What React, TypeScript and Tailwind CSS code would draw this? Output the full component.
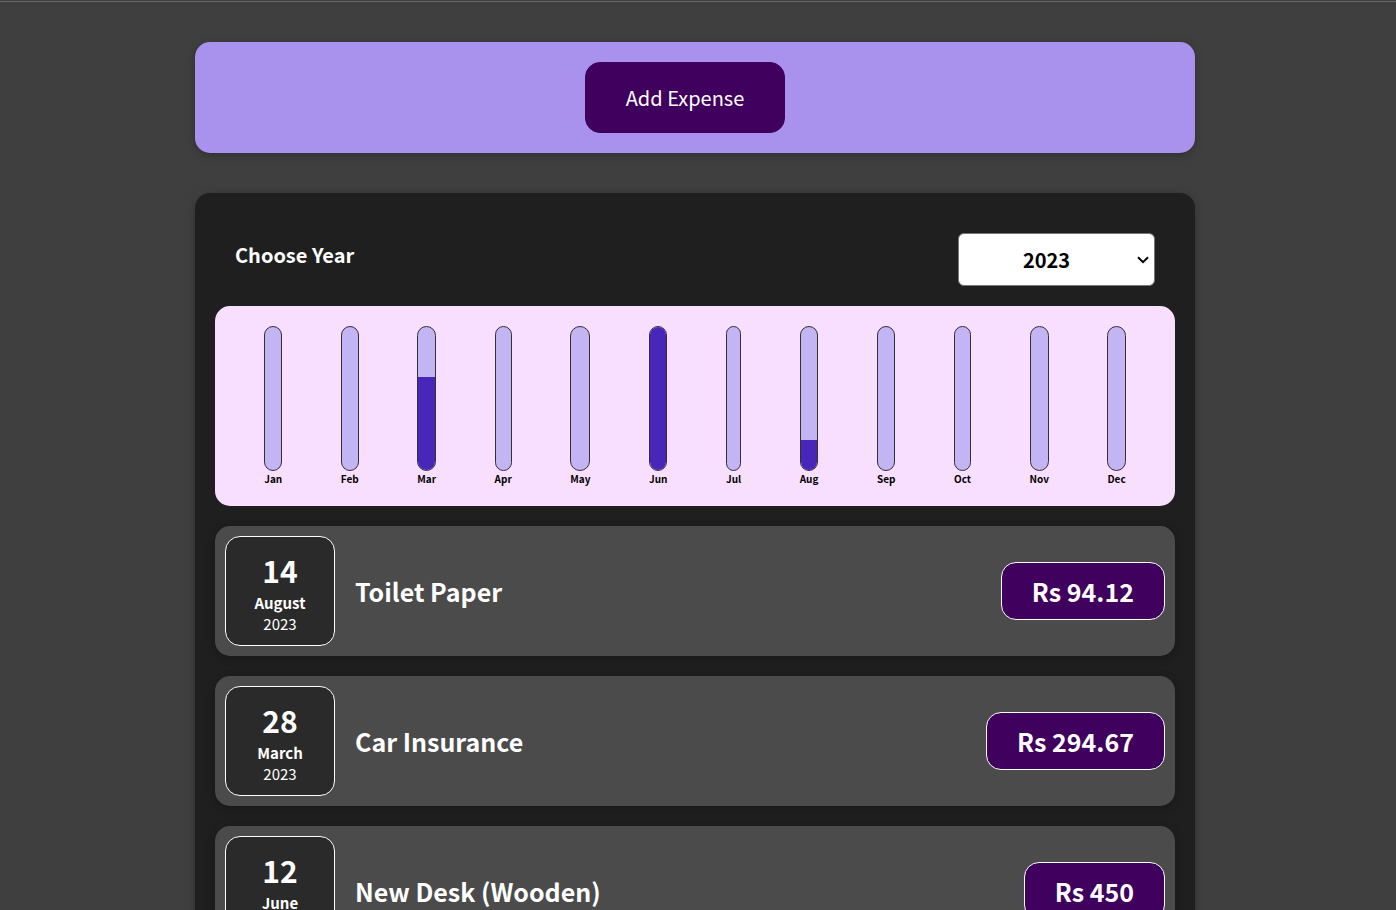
import { useState } from "react";

type Expense = {
  id: string;
  title: string;
  amount: string;
  day: string;
  month: string;
  year: string;
};

const MONTHS = [
  { label: "Jan", share: 0 },
  { label: "Feb", share: 0 },
  { label: "Mar", share: 65 },
  { label: "Apr", share: 0 },
  { label: "May", share: 0 },
  { label: "Jun", share: 100 },
  { label: "Jul", share: 0 },
  { label: "Aug", share: 21 },
  { label: "Sep", share: 0 },
  { label: "Oct", share: 0 },
  { label: "Nov", share: 0 },
  { label: "Dec", share: 0 },
];

const EXPENSES: Expense[] = [
  { id: "e1", title: "Toilet Paper", amount: "Rs 94.12", day: "14", month: "August", year: "2023" },
  { id: "e2", title: "Car Insurance", amount: "Rs 294.67", day: "28", month: "March", year: "2023" },
  { id: "e3", title: "New Desk (Wooden)", amount: "Rs 450", day: "12", month: "June", year: "2023" },
];

function ChartBar({ label, share }: { label: string; share: number }) {
  return (
    <div className="flex h-full flex-col items-center">
      <div className="flex w-full flex-1 flex-col justify-end overflow-hidden rounded-xl border border-[#313131] bg-[#c3b4f3]">
        <div className="bg-[#4826b9]" style={{ height: `${share}%` }} />
      </div>
      <div className="text-center text-[10px] leading-[15px] font-bold text-black">{label}</div>
    </div>
  );
}

function ExpenseItem({ expense }: { expense: Expense }) {
  return (
    <li className="flex items-center gap-5 rounded-[15px] bg-[#4b4b4b] p-2.5 shadow-[0_2px_8px_rgba(0,0,0,0.25)]">
      <time className="flex size-[110px] shrink-0 flex-col items-center justify-center rounded-[15px] border border-white bg-[#2a2a2a] text-[15px]">
        <span className="text-[30px] leading-[44px] font-bold">{expense.day}</span>
        <span className="leading-[21px] font-bold">{expense.month}</span>
        <span className="leading-[21px]">{expense.year}</span>
      </time>
      <h2 className="min-w-0 flex-1 text-[25px] leading-10 font-bold">{expense.title}</h2>
      <div className="rounded-[15px] border border-white bg-[#40005d] px-[30px] py-2 text-[25px] leading-10 font-bold">
        {expense.amount}
      </div>
    </li>
  );
}

export default function App() {
  const [year, setYear] = useState("2023");

  return (
    <div className="h-screen overflow-x-hidden overflow-y-auto bg-[#3f3f3f] pr-1.5 font-['Noto_Sans_CJK_JP',sans-serif] text-white [scrollbar-width:none]">
      <div className="-mr-1.5 h-0.5 border-b border-[#666666]" />
      <main className="mx-auto flex w-full max-w-[1000px] flex-col gap-10 py-10">
        <section className="flex justify-center rounded-[15px] bg-[#a892ee] p-5 shadow-[0_2px_8px_rgba(0,0,0,0.25)]">
          <button
            type="button"
            className="mr-5 cursor-pointer rounded-[15px] border border-[#40005d] bg-[#40005d] px-10 py-5 text-xl leading-[29px]"
          >
            Add Expense
          </button>
        </section>

        <section className="rounded-[15px] bg-[#1f1f1f] p-5 shadow-[0_2px_8px_rgba(0,0,0,0.25)]">
          <div className="flex items-start justify-between p-5">
            <label htmlFor="year" className="pt-1.5 text-xl leading-8 font-bold">
              Choose Year
            </label>
            <div className="relative">
              <select
                id="year"
                value={year}
                onChange={(event) => setYear(event.target.value)}
                className="block h-[53px] w-[197px] appearance-none rounded-md border border-[#767676] bg-white pr-5 text-center text-xl font-bold text-black"
              >
                <option value="2023">2023</option>
                <option value="2022">2022</option>
                <option value="2021">2021</option>
                <option value="2020">2020</option>
              </select>
              <svg
                aria-hidden="true"
                viewBox="0 0 12 8"
                className="pointer-events-none absolute top-[23px] right-1.5 h-2 w-3"
                fill="none"
                stroke="black"
                strokeWidth="2"
              >
                <path d="M1 1.2 L6 6.2 L11 1.2" />
              </svg>
            </div>
          </div>

          <div className="flex h-[200px] justify-around rounded-[15px] bg-[#f8dfff] p-5">
            {MONTHS.map((month) => (
              <ChartBar key={month.label} label={month.label} share={month.share} />
            ))}
          </div>

          <ul className="mt-5 flex flex-col gap-5">
            {EXPENSES.map((expense) => (
              <ExpenseItem key={expense.id} expense={expense} />
            ))}
          </ul>
        </section>
      </main>
    </div>
  );
}
